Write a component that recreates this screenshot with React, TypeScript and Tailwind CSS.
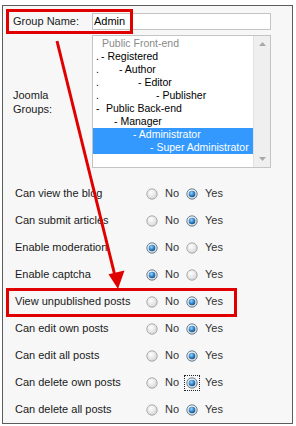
import React from "react";

const groups = [
  { pre: "", pad: 6, text: "Public Front-end", muted: true },
  { pre: ".", pad: 5, text: "- Registered" },
  { pre: ".", pad: 23, text: "- Author" },
  { pre: ".", pad: 42, text: "- Editor" },
  { pre: ".", pad: 60, text: "- Publisher" },
  { pre: "-", pad: 10, text: "Public Back-end" },
  { pre: "", pad: 18, text: "- Manager" },
  { pre: "", pad: 37, text: "- Administrator", selected: true },
  { pre: "", pad: 54, text: "- Super Administrator", selected: true },
];

const perms = [
  { label: "Can view the blog", yes: true },
  { label: "Can submit articles", yes: true },
  { label: "Enable moderation", yes: false },
  { label: "Enable captcha", yes: false },
  { label: "View unpublished posts", yes: true },
  { label: "Can edit own posts", yes: true },
  { label: "Can edit all posts", yes: true },
  { label: "Can delete own posts", yes: true, focus: true },
  { label: "Can delete all posts", yes: true },
];

const Radio = ({ checked }: { checked: boolean }) => (
  <svg width="12" height="12" viewBox="0 0 12 12" className="block">
    <defs>
      <radialGradient id="rOff" cx="40%" cy="35%" r="70%">
        <stop offset="0%" stopColor="#ffffff" />
        <stop offset="100%" stopColor="#d4d4d4" />
      </radialGradient>
      <radialGradient id="rDot" cx="40%" cy="35%" r="70%">
        <stop offset="0%" stopColor="#9fd3fb" />
        <stop offset="55%" stopColor="#2f86cc" />
        <stop offset="100%" stopColor="#174a78" />
      </radialGradient>
    </defs>
    <circle
      cx="6"
      cy="6"
      r="5.2"
      fill="url(#rOff)"
      stroke={checked ? "#5a7489" : "#a3a3a3"}
      strokeWidth="0.9"
    />
    {checked && <circle cx="6" cy="6" r="3.3" fill="url(#rDot)" />}
  </svg>
);

export default function App() {
  return (
    <div
      className="relative w-[296px] h-[426px] bg-white pt-[5px] pl-[2px] text-[11px] text-[#1a1a1a]"
      style={{ fontFamily: '"Liberation Sans", Arial, sans-serif' }}
    >
      <div className="w-[291px] h-[419px] border border-[#5c5c5c] bg-[#f7f7f7]">
        {/* group fields */}
        <div className="grid grid-cols-[89px_179px] mt-[7px] gap-y-[5px]">
          <div className="pl-[10px] h-[17px] flex items-center">Group Name:</div>
          <div className="h-[17px] bg-white border border-[#c4c4c4] flex items-center pl-[1px] text-black">
            Admin
          </div>

          <div className="pl-[10px] pt-[54px] leading-[13.5px]">
            Joomla
            <br />
            Groups:
          </div>
          <div className="h-[133px] bg-white border border-[#c4c4c4] flex">
            <div className="flex-1 pt-[1px] text-[10.5px]">
              {groups.map((g) => (
                <div
                  key={g.text}
                  className={
                    "flex h-[13px] leading-[13px] whitespace-nowrap pl-[3px] " +
                    (g.selected ? "bg-[#3399ff] text-white" : g.muted ? "text-[#8a8a8a]" : "text-black")
                  }
                >
                  <span className="shrink-0" style={{ width: g.pad }}>
                    {g.pre}
                  </span>
                  <span>{g.text}</span>
                </div>
              ))}
            </div>
            <div className="w-[17px] bg-[#efefef] border-l border-[#e2e2e2] flex flex-col items-center justify-between py-[6px]">
              <svg width="7" height="4" viewBox="0 0 7 4">
                <path d="M0 4 L3.5 0 L7 4 Z" fill="#a8a8a8" />
              </svg>
              <svg width="7" height="4" viewBox="0 0 7 4">
                <path d="M0 0 L3.5 4 L7 0 Z" fill="#a8a8a8" />
              </svg>
            </div>
          </div>
        </div>

        {/* permissions */}
        <div className="mt-[12px]">
          {perms.map((p) => (
            <div key={p.label} className="flex items-center h-[27px] pl-[12px]">
              <span className="w-[131px]">{p.label}</span>
              <Radio checked={!p.yes} />
              <span className="ml-[7px] w-[21px] text-[#333]">No</span>
              {p.focus ? (
                <span className="-m-[2px] p-[1px] border border-dotted border-[#222]">
                  <Radio checked={p.yes} />
                </span>
              ) : (
                <Radio checked={p.yes} />
              )}
              <span className="ml-[7px] text-[#333]">Yes</span>
            </div>
          ))}
        </div>
      </div>

      {/* annotations */}
      <div className="absolute left-[6px] top-[9px] w-[127px] h-[25px] border-[3px] border-[#e10000]" />
      <div className="absolute left-[6px] top-[288px] w-[231px] h-[29px] border-[3px] border-[#e10000]" />
      <svg className="absolute left-0 top-0" width="296" height="426" viewBox="0 0 296 426">
        <line x1="57" y1="41" x2="115" y2="276" stroke="#e10000" strokeWidth="3" />
        <polygon points="118,289 124.5,270.5 108.5,274.3" fill="#e10000" />
      </svg>
    </div>
  );
}
